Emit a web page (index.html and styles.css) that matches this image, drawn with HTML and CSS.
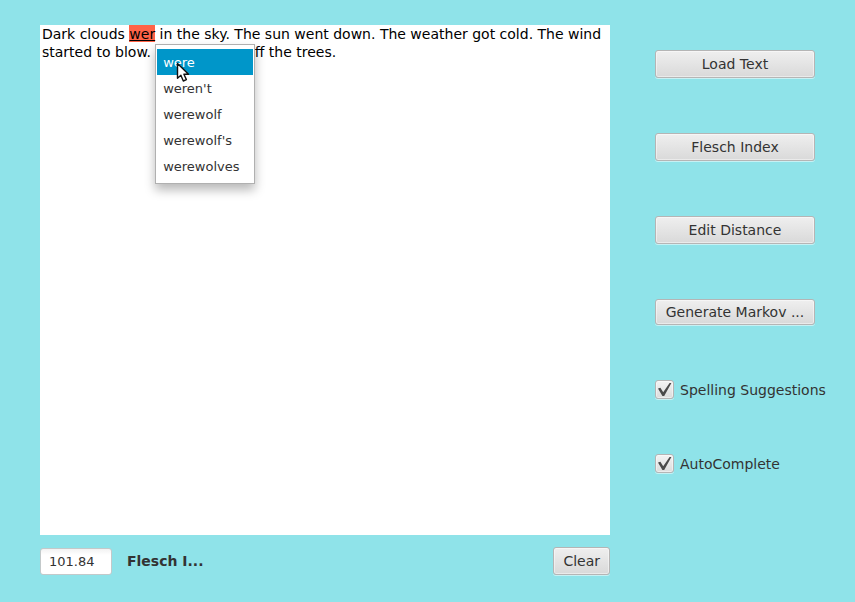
FILE: index.html
```html
<!DOCTYPE html>
<html lang="en">
<head>
  <meta charset="utf-8">
  <title>Text Editor</title>
  <link rel="stylesheet" href="styles.css">
</head>
<body>
  <div class="app">
    <main class="workspace">
      <div class="editor" role="textbox" aria-multiline="true" aria-label="Document text">Dark clouds <span class="misspelled"><mark class="word">wer</mark><span class="menu" role="menu">
        <button class="menu-item selected" type="button" role="menuitem">were</button>
        <button class="menu-item" type="button" role="menuitem">weren't</button>
        <button class="menu-item" type="button" role="menuitem">werewolf</button>
        <button class="menu-item" type="button" role="menuitem">werewolf's</button>
        <button class="menu-item" type="button" role="menuitem">werewolves</button>
        <svg class="pointer" width="14" height="21" viewBox="0 0 14 21" aria-hidden="true">
          <path d="M1.5 1.5V16.2L4.9 13.2L7.3 19L10.4 17.6L7.9 12.2H12.5Z" fill="#fff" stroke="#111" stroke-width="1.4" stroke-linejoin="round"/>
        </svg></span></span> in the sky. The sun went down. The weather got cold. The wind started to blow. Leaves blew off the trees.</div>
      <div class="footer">
        <input class="score" id="score" type="text" value="101.84" readonly>
        <label class="score-label" for="score">Flesch I...</label>
        <button class="button clear" type="button">Clear</button>
      </div>
    </main>
    <aside class="tools">
      <button class="button" type="button">Load Text</button>
      <button class="button" type="button">Flesch Index</button>
      <button class="button" type="button">Edit Distance</button>
      <button class="button compact" type="button">Generate Markov ...</button>
      <div class="options">
        <label class="option"><span class="tick"><input type="checkbox" checked><svg viewBox="0 0 19 19" aria-hidden="true"><path d="M3 8.6L5.4 7.8L8.2 12.2L14.6 3H16.4L9.2 16H7.4Z"/></svg></span>Spelling Suggestions</label>
        <label class="option"><span class="tick"><input type="checkbox" checked><svg viewBox="0 0 19 19" aria-hidden="true"><path d="M3 8.6L5.4 7.8L8.2 12.2L14.6 3H16.4L9.2 16H7.4Z"/></svg></span>AutoComplete</label>
      </div>
    </aside>
  </div>
</body>
</html>
```
FILE: styles.css
```css
* {
  box-sizing: border-box;
}

body {
  margin: 0;
  background: #8fe3e9;
  color: #333;
  font: 14px/18px "DejaVu Sans", sans-serif;
}

button,
input {
  margin: 0;
  font: inherit;
  color: inherit;
}

.app {
  display: grid;
  grid-template-columns: minmax(0, 1fr) 160px;
  gap: 45px;
  min-height: 100vh;
  padding: 25px 40px 27px;
}

.workspace {
  display: flex;
  flex-direction: column;
  gap: 12px;
}

.editor {
  flex: 1;
  padding: 0 2px;
  background: #fff;
  color: #000;
}

.misspelled {
  position: relative;
}

.word {
  padding-top: 1px;
  background: #ff6347;
  color: inherit;
  text-decoration: underline;
}

.menu {
  position: absolute;
  top: 100%;
  left: 100%;
  z-index: 1;
  display: flex;
  flex-direction: column;
  width: 100px;
  margin-top: 2px;
  padding: 4px 1px;
  border: 1px solid #b0b0b0;
  background: #fff;
  box-shadow: 0 6px 10px rgb(0 0 0 / 28%);
}

.menu-item {
  height: 26px;
  padding: 1px 6px 0;
  border: 0;
  background: none;
  color: #333;
  font-size: 13px;
  text-align: left;
}

.selected {
  background: #0096c9;
  color: #fff;
}

.pointer {
  position: absolute;
  top: 17px;
  left: 20px;
}

.footer {
  display: flex;
  align-items: center;
}

.score {
  width: 72px;
  height: 27px;
  padding: 0 8px;
  border: 1px solid #c3c9ca;
  border-radius: 3px;
  background: linear-gradient(#f2f2f2, #fff 6px);
  font-size: 13px;
}

.score-label {
  margin-left: 15px;
  font-weight: bold;
  white-space: nowrap;
}

.button {
  height: 28px;
  padding: 0 9px;
  border: 1px solid #b5b5b5;
  border-radius: 3px;
  background: linear-gradient(#efefef, #d9d9d9);
  box-shadow: inset 0 0 0 1px rgb(255 255 255 / 45%), 0 1px 0 rgb(255 255 255 / 50%);
  white-space: nowrap;
}

.compact {
  height: 26px;
}

.clear {
  margin-left: auto;
}

.tools {
  display: flex;
  flex-direction: column;
  gap: 55px;
  padding-top: 25px;
}

.options {
  display: flex;
  flex-direction: column;
  gap: 55px;
}

.option {
  display: flex;
  align-items: center;
  gap: 6px;
  white-space: nowrap;
}

.tick {
  display: grid;
  width: 19px;
  height: 19px;
}

.tick > * {
  grid-area: 1 / 1;
  width: 19px;
  height: 19px;
}

.tick input {
  appearance: none;
  border: 1px solid #b5b5b5;
  border-radius: 3px;
  background: linear-gradient(#f3f3f3, #dcdcdc);
  box-shadow: inset 0 0 0 1px rgb(255 255 255 / 45%), 0 1px 0 rgb(255 255 255 / 50%);
}

.tick svg {
  fill: #4a4a4a;
  pointer-events: none;
}

.tick input:not(:checked) + svg {
  visibility: hidden;
}
```
